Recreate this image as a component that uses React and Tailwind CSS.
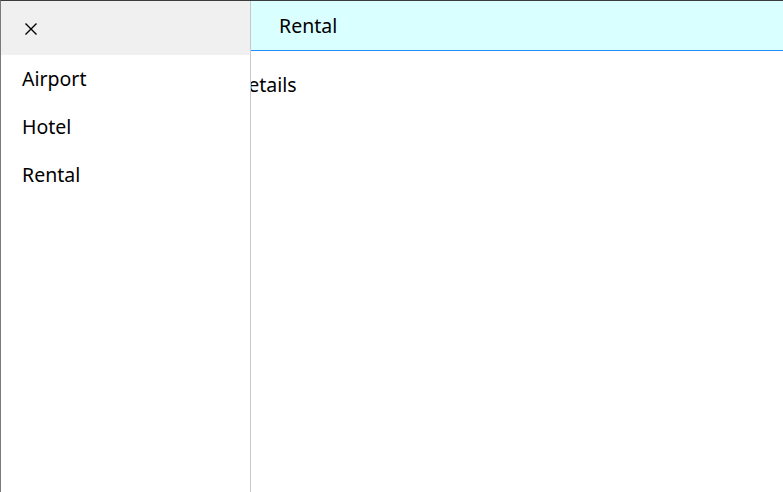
export default function App() {
  const items = ['Airport', 'Hotel', 'Rental'];

  return (
    <div
      className="relative h-[492px] w-[783px] overflow-hidden border-t border-l border-t-[#3c3c3c] border-l-[#7a7a7a] bg-white text-black"
      style={{ fontFamily: '"Noto Sans", "Open Sans", sans-serif' }}
    >
      {/* main page */}
      <div className="flex h-[50px] items-center border-b border-[#1e90ff] bg-[#d9ffff] pl-[278px] pt-[1px] text-[19.5px]">
        Rental
      </div>
      <div className="pl-[233px] pt-[19px] text-[19.5px]">Details</div>

      {/* side drawer */}
      <div className="absolute top-0 bottom-0 left-0 flex w-[250px] flex-col border-r border-[#c8c8c8] bg-white">
        <div className="flex h-[54px] items-center bg-[#f0f0f0] pl-[23px]">
          <svg width="14" height="14" viewBox="0 0 14 14" className="mt-[1px]">
            <path d="M1.5 1.5 L12.5 12.5 M12.5 1.5 L1.5 12.5" stroke="#000" strokeWidth="1.4" fill="none" />
          </svg>
        </div>
        <div className="flex flex-col">
          {items.map((it) => (
            <div key={it} className="flex h-[48px] items-center pl-[21px] text-[19.5px]">
              {it}
            </div>
          ))}
        </div>
      </div>
    </div>
  );
}
